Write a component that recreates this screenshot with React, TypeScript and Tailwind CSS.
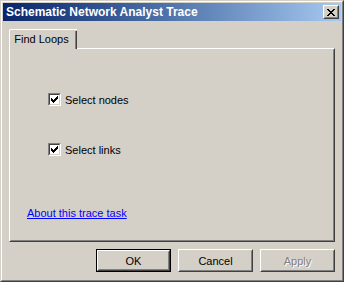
import React from "react";

const font = { fontFamily: '"Liberation Sans", Arial, sans-serif' };

function Check({ label }: { label: string }) {
  return (
    <div className="flex items-center h-[13px]">
      <div className="w-[13px] h-[13px] border border-t-[#808080] border-l-[#808080] border-b-white border-r-white">
        <div className="w-[11px] h-[11px] border border-t-[#404040] border-l-[#404040] border-b-[#d4d0c8] border-r-[#d4d0c8] bg-white flex items-center justify-center">
          <svg width="7" height="7" viewBox="0 0 7 7" shapeRendering="crispEdges">
            <path d="M0 2h1v3h-1zM1 3h1v3h-1zM2 4h1v3h-1zM3 3h1v3h-1zM4 2h1v3h-1zM5 1h1v3h-1zM6 0h1v3h-1z" fill="#000" />
          </svg>
        </div>
      </div>
      <span className="ml-[4px] text-[11px] text-black leading-[13px] mt-[1px]">{label}</span>
    </div>
  );
}

function Btn({ label, def, disabled }: { label: string; def?: boolean; disabled?: boolean }) {
  const inner = (
    <div className="w-full h-full border border-t-white border-l-white border-b-[#404040] border-r-[#404040]">
      <div className="w-full h-full border border-t-[#d4d0c8] border-l-[#d4d0c8] border-b-[#808080] border-r-[#808080] flex items-center justify-center">
        <span
          className={
            "text-[11px] leading-none mt-[1px] " +
            (disabled ? "text-[#808080] [text-shadow:1px_1px_0_#ffffff]" : "text-black")
          }
        >
          {label}
        </span>
      </div>
    </div>
  );
  return (
    <div className={"w-[75px] h-[23px] " + (def ? "border border-black" : "")}>{inner}</div>
  );
}

export default function App() {
  return (
    <div style={font} className="w-[344px] h-[282px] bg-[#d4d0c8] select-none">
      <div className="w-full h-full border border-t-[#d4d0c8] border-l-[#d4d0c8] border-b-[#404040] border-r-[#404040]">
        <div className="w-full h-full border border-t-white border-l-white border-b-[#808080] border-r-[#808080] p-[1px] flex flex-col">
          {/* Title bar */}
          <div className="h-[18px] flex items-center justify-between bg-gradient-to-r from-[#0a246a] to-[#a6caf0] pl-[3px] pr-[2px]">
            <span className="text-white font-bold text-[12px] leading-none">
              Schematic Network Analyst Trace
            </span>
            <div className="w-[16px] h-[14px] bg-[#d4d0c8] border border-t-white border-l-white border-b-[#404040] border-r-[#404040]">
              <div className="w-full h-full border border-t-[#d4d0c8] border-l-[#d4d0c8] border-b-[#808080] border-r-[#808080] flex items-center justify-center">
                <svg width="8" height="7" viewBox="0 0 8 7" shapeRendering="crispEdges">
                  <path
                    d="M0 0h2v1h-2zM6 0h2v1h-2zM1 1h2v1h-2zM5 1h2v1h-2zM2 2h4v1h-4zM3 3h2v1h-2zM2 4h4v1h-4zM1 5h2v1h-2zM5 5h2v1h-2zM0 6h2v1h-2zM6 6h2v1h-2z"
                    fill="#000"
                  />
                </svg>
              </div>
            </div>
          </div>

          {/* Body */}
          <div className="flex-1 flex flex-col pl-[6px] pr-[6px] pt-[8px]">
            {/* Tab header */}
            <div className="flex h-[20px]">
              <div className="w-[68px] h-[20px] border-t border-l border-white rounded-tl-[2px] border-r-0 relative flex items-center justify-center bg-[#d4d0c8] z-10">
                <div className="absolute right-0 top-[1px] bottom-0 w-[2px] border-l border-[#808080] border-r-[1px] border-r-[#404040]" />
                <span className="text-[11px] text-black leading-none pr-[4px]">Find Loops</span>
              </div>
              <div className="flex-1" />
            </div>
            {/* Panel */}
            <div className="h-[194px] -mt-[1px] border border-t-white border-l-white border-b-[#404040] border-r-[#404040]">
              <div className="w-full h-full border border-t-[#d4d0c8] border-l-[#d4d0c8] border-b-[#808080] border-r-[#808080] flex flex-col pl-[37px] pt-[43px]">
                <Check label="Select nodes" />
                <div className="h-[37px]" />
                <Check label="Select links" />
                <div className="h-[52px]" />
                <a className="-ml-[21px] text-[11px] text-[#0000ff] underline leading-none cursor-pointer">
                  About this trace task
                </a>
              </div>
            </div>
            {/* Buttons */}
            <div className="flex justify-end gap-[7px] mt-[7px]">
              <Btn label="OK" def />
              <Btn label="Cancel" />
              <Btn label="Apply" disabled />
            </div>
          </div>
        </div>
      </div>
    </div>
  );
}
